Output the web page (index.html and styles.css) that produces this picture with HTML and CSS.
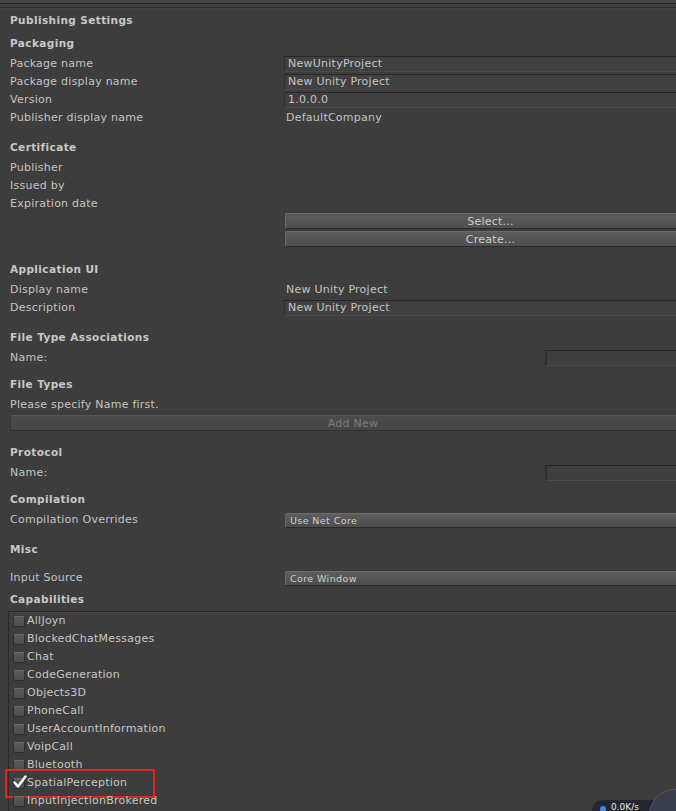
FILE: index.html
```html
<!DOCTYPE html>
<html>
<head>
<meta charset="utf-8">
<link rel="stylesheet" href="styles.css">
</head>
<body>
<div class="topbar"><div class="topline"></div><div class="topline2"></div></div>
<div class="panel">
  <div class="title">Publishing Settings</div>

  <div class="head h-pack">Packaging</div>
  <div class="row"><span class="label">Package name</span><span class="field">NewUnityProject</span></div>
  <div class="row"><span class="label">Package display name</span><span class="field">New Unity Project</span></div>
  <div class="row"><span class="label">Version</span><span class="field">1.0.0.0</span></div>
  <div class="row"><span class="label">Publisher display name</span><span class="value">DefaultCompany</span></div>

  <div class="head gap11">Certificate</div>
  <div class="row"><span class="label">Publisher</span></div>
  <div class="row"><span class="label">Issued by</span></div>
  <div class="row"><span class="label">Expiration date</span></div>
  <div class="row btnrow"><span class="label"></span><span class="btn">Select...</span></div>
  <div class="row"><span class="label"></span><span class="btn">Create...</span></div>

  <div class="head gap12">Application UI</div>
  <div class="row"><span class="label">Display name</span><span class="value">New Unity Project</span></div>
  <div class="row"><span class="label">Description</span><span class="field">New Unity Project</span></div>

  <div class="head gap11">File Type Associations</div>
  <div class="row"><span class="label">Name:</span><span class="smallfield"></span></div>

  <div class="head gap8">File Types</div>
  <div class="row"><span class="label">Please specify Name first.</span></div>
  <div class="fullrow"><span class="btn disabled">Add New</span></div>

  <div class="head gap11">Protocol</div>
  <div class="row"><span class="label">Name:</span><span class="smallfield"></span></div>

  <div class="head gap8">Compilation</div>
  <div class="row"><span class="label">Compilation Overrides</span><span class="popup">Use Net Core</span></div>

  <div class="head gap11">Misc</div>
  <div class="row gap11"><span class="label">Input Source</span><span class="popup">Core Window</span></div>

  <div class="head gap3">Capabilities</div>
  <div class="capbox">
    <div class="cap"><span class="cb"></span>AllJoyn</div>
    <div class="cap"><span class="cb"></span>BlockedChatMessages</div>
    <div class="cap"><span class="cb"></span>Chat</div>
    <div class="cap"><span class="cb"></span>CodeGeneration</div>
    <div class="cap"><span class="cb"></span>Objects3D</div>
    <div class="cap"><span class="cb"></span>PhoneCall</div>
    <div class="cap"><span class="cb"></span>UserAccountInformation</div>
    <div class="cap"><span class="cb"></span>VoipCall</div>
    <div class="cap"><span class="cb"></span>Bluetooth</div>
    <div class="cap highlighted"><span class="cb checked"><svg width="14" height="14" viewBox="0 0 14 14"><path d="M1.5 7.5 L5 11.5 L12.5 1.5" fill="none" stroke="#ffffff" stroke-width="2.4" stroke-linecap="round" stroke-linejoin="round"/></svg></span>SpatialPerception<span class="redbox"></span></div>
    <div class="cap"><span class="cb"></span>InputInjectionBrokered</div>
  </div>
</div>
<div class="netpill"><span class="dot"></span><span class="speed">0.0K/s</span></div>
<div class="netcircle"></div>
</body>
</html>
```

FILE: styles.css
```css
html, body {
  margin: 0;
  padding: 0;
  width: 676px;
  height: 811px;
  overflow: hidden;
  background: #3d3d3d;
  font-family: "DejaVu Sans", Verdana, sans-serif;
  font-size: 11px;
  color: #c4c4c4;
  position: relative;
}
.topbar {
  height: 9px;
  background: #424242;
}
.topline {
  height: 3px;
  background: #474747;
  border-bottom: 1px solid #262626;
}
.topline2 {
  height: 3px;
  border-bottom: 1px solid #2b2b2b;
  background: #3f3f3f;
}
.panel {
  width: 685px;
  padding-left: 10px;
  padding-top: 2px;
  letter-spacing: 0.25px;
}
.title, .head {
  font-weight: bold;
  height: 18px;
  line-height: 18px;
  font-size: 10.5px;
  color: #c8c8c8;
  margin-bottom: 3px;
  letter-spacing: 0.4px;
}
.title { margin-bottom: 2px; }
.h-pack { margin-top: 5px; }
.gap12 { margin-top: 12px; }
.gap11 { margin-top: 11px; }
.gap8 { margin-top: 8px; }
.gap3 { margin-top: 3px; }
.row {
  display: flex;
  height: 18px;
  line-height: 18px;
  align-items: center;
}
.btnrow { margin-top: -1px; }
.label {
  width: 274px;
  flex: none;
  white-space: nowrap;
}
.field, .value {
  flex: 1;
  height: 16px;
  line-height: 16px;
  box-sizing: border-box;
  padding-left: 3px;
  white-space: nowrap;
}
.field {
  background: #404040;
  border-top: 1px solid #272727;
  border-left: 1px solid #2f2f2f;
  border-bottom: 1px solid #4a4a4a;
  line-height: 14px;
}
.value { padding-left: 2px; }
.smallfield {
  margin-left: 261px;
  flex: 1;
  height: 16px;
  box-sizing: border-box;
  background: #3f3f3f;
  border-top: 1px solid #262626;
  border-left: 2px solid #2f2f2f;
  border-bottom: 1px solid #4b4b4b;
}
.btn {
  flex: 1;
  margin-left: 1px;
  height: 16px;
  line-height: 15px;
  box-sizing: border-box;
  text-align: center;
  color: #cdcdcd;
  background: linear-gradient(#5d5d5d, #555555 50%, #4f4f4f);
  border-top: 1px solid #6a6a6a;
  border-left: 1px solid #6a6a6a;
  border-bottom: 1px solid #2c2c2c;
  border-radius: 2px 0 0 2px;
  white-space: nowrap;
}
.fullrow {
  display: flex;
  height: 18px;
  align-items: center;
  margin-left: -1px;
}
.btn.disabled {
  color: #7c7c7c;
  background: linear-gradient(#4b4b4b, #464646);
  border-top: 1px solid #565656;
  border-left: 1px solid #363636;
  border-bottom: 1px solid #303030;
}
.popup {
  flex: 1;
  margin-left: 1px;
  height: 15px;
  line-height: 14px;
  box-sizing: border-box;
  padding-left: 4px;
  font-size: 9.5px;
  color: #d0d0d0;
  letter-spacing: 0.4px;
  background: linear-gradient(#5e5e5e, #545454 50%, #4d4d4d);
  border-top: 1px solid #6c6c6c;
  border-left: 1px solid #666666;
  border-bottom: 1px solid #2a2a2a;
  border-radius: 2px 0 0 2px;
  white-space: nowrap;
}
.capbox {
  margin-left: -2px;
  border-top: 1px solid #2a2a2a;
  border-left: 1px solid #2a2a2a;
  box-shadow: inset 0 1px 0 #454545;
  padding-left: 4px;
  height: 300px;
}
.cap {
  position: relative;
  display: flex;
  align-items: center;
  height: 18px;
  line-height: 18px;
  white-space: nowrap;
  color: #c6c6c6;
}
.cb {
  width: 12px;
  height: 11px;
  box-sizing: border-box;
  margin-right: 2px;
  background: linear-gradient(#5a5a5a, #4c4c4c);
  border: 1px solid #2e2e2e;
  border-top-color: #6a6a6a;
  border-radius: 2px;
  position: relative;
}
.cb svg {
  position: absolute;
  left: -1px;
  top: -4px;
}
.redbox {
  position: absolute;
  left: -8px;
  top: -5px;
  width: 150px;
  height: 29px;
  box-sizing: border-box;
  border: 2.5px solid #e3231f;
}
.netpill {
  position: absolute;
  left: 592px;
  top: 800px;
  width: 90px;
  height: 22px;
  border-radius: 11px;
  background: #23262e;
  display: flex;
  align-items: flex-start;
  padding-left: 8px;
  box-sizing: border-box;
}
.dot {
  width: 6px;
  height: 6px;
  border-radius: 50%;
  background: #3b8ee8;
  margin-top: 6px;
  margin-right: 5px;
}
.speed {
  font-size: 9px;
  color: #e6e6e6;
  line-height: 14px;
}
.netcircle {
  position: absolute;
  left: 649px;
  top: 789px;
  width: 50px;
  height: 50px;
  border-radius: 50%;
  background: #3a3e4b;
  border: 1px solid #50566a;
}
```
